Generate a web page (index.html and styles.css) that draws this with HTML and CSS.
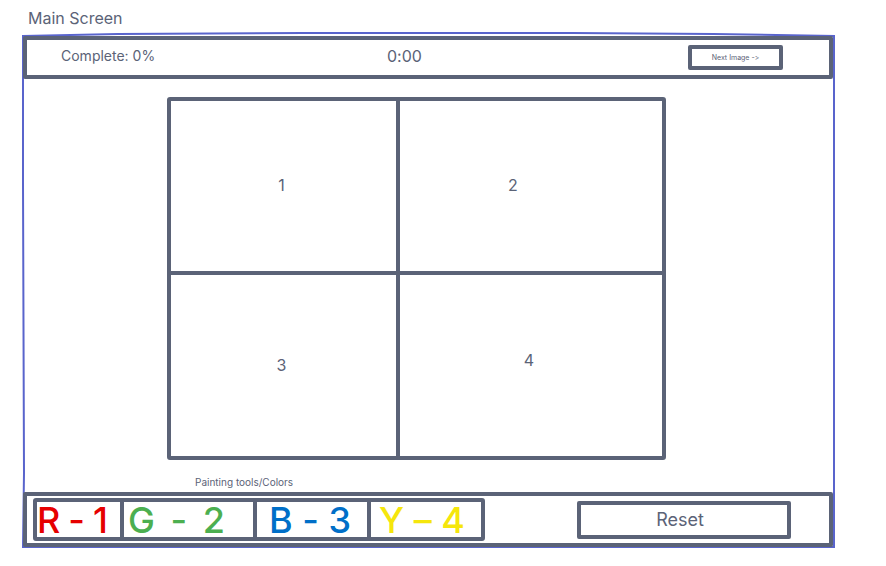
FILE: index.html
```html
<!DOCTYPE html>
<html lang="en">
<head>
<meta charset="utf-8">
<title>Main Screen</title>
<link rel="stylesheet" href="styles.css">
</head>
<body>
<h1 class="title">Main Screen</h1>
<div class="screen">
  <svg class="outline" viewBox="0 0 811 514" preserveAspectRatio="none" aria-hidden="true">
    <path d="M0 3 L95 1 L280 0 H550 L690 1 L811 3 V514 H0 L1 440 L0 150 Z"/>
  </svg>
  <header class="bar status">
    <span class="readout progress">Complete: 0%</span>
    <span class="readout">0:00</span>
    <button class="box next" type="button">Next Image -&gt;</button>
  </header>
  <main class="stage">
    <div class="canvas">
      <button class="cell" type="button">1</button>
      <button class="cell shifted" type="button">2</button>
      <button class="cell" type="button">3</button>
      <button class="cell raised" type="button">4</button>
    </div>
    <h2 class="caption">Painting tools/Colors</h2>
  </main>
  <footer class="bar controls">
    <div class="palette">
      <button class="tool red" type="button"><span>R</span><span>-</span><span>1</span></button>
      <button class="tool green" type="button"><span>G</span><span>-</span><span>2</span></button>
      <button class="tool blue" type="button"><span>B</span><span>-</span><span>3</span></button>
      <button class="tool yellow" type="button"><span>Y</span><span>–</span><span>4</span></button>
    </div>
    <button class="box reset" type="button">Reset</button>
  </footer>
</div>
</body>
</html>
```

FILE: styles.css
```css
:root {
  --ink: #5b6377;
}

* {
  box-sizing: border-box;
}

body {
  margin: 0;
  padding: 8px 52px 16px 23px;
  background: #fff;
  color: var(--ink);
  font: 16px/20px Inter, "Liberation Sans", sans-serif;
  font-feature-settings: "calt" 0;
}

button {
  margin: 0;
  padding: 0;
  border: 0;
  background: #fff;
  color: inherit;
  font: inherit;
  font-feature-settings: inherit;
  cursor: pointer;
}

.title {
  margin: 0 0 5px 5px;
  font-size: 16px;
  font-weight: 400;
}

.screen {
  position: relative;
  padding-top: 3px;
}

.outline {
  position: absolute;
  inset: 0;
  width: 100%;
  height: 100%;
  overflow: visible;
  fill: none;
  stroke: #5964cc;
  stroke-width: 2;
  pointer-events: none;
}

.outline path {
  vector-effect: non-scaling-stroke;
}

.bar {
  position: relative;
  display: grid;
  align-items: center;
  margin-right: 1px;
  border: 4px solid var(--ink);
  border-radius: 2px;
  background: #fff;
}

.status {
  grid-template-columns: 326fr 301fr 95fr;
  padding: 5px 46px 5px 34px;
}

.readout {
  padding-bottom: 4px;
}

.progress {
  font-size: 14px;
}

.box {
  border: 4px solid var(--ink);
  border-radius: 2px;
}

.next {
  height: 25px;
  font-size: 7px;
  line-height: 12px;
}

.stage {
  padding: 18px 168px 0 144px;
}

.canvas {
  display: grid;
  grid-template-columns: 225fr 262fr;
  grid-template-rows: 170px 181px;
  gap: 4px;
  border: 4px solid var(--ink);
  border-radius: 3px;
  background: var(--ink);
}

.cell {
  padding: 0 4px 2px 0;
}

.shifted {
  padding-right: 36px;
}

.raised {
  padding-bottom: 12px;
}

.caption {
  margin: 12px 0 0 28px;
  font-size: 10px;
  font-weight: 400;
}

.controls {
  grid-template-columns: 452fr 214fr;
  gap: 92px;
  padding: 2px 38px 2px 6px;
}

.palette {
  display: grid;
  grid-template-columns: 83fr 129fr 110fr 110fr;
  gap: 4px;
  border: 4px solid var(--ink);
  border-radius: 3px;
  background: var(--ink);
}

.tool {
  display: flex;
  justify-content: space-between;
  align-items: center;
  height: 35px;
  font-size: 36px;
  font-weight: 500;
}

.red {
  padding: 0 12px 0 0;
  color: #e60000;
}

.green {
  padding: 0 28px 0 4px;
  color: #4caf50;
}

.blue {
  padding: 0 16px 0 12px;
  color: #006fc8;
}

.yellow {
  padding: 0 16px 0 8px;
  color: #f5e60c;
}

.reset {
  height: 38px;
  padding-right: 8px;
  font-size: 18px;
}
```
